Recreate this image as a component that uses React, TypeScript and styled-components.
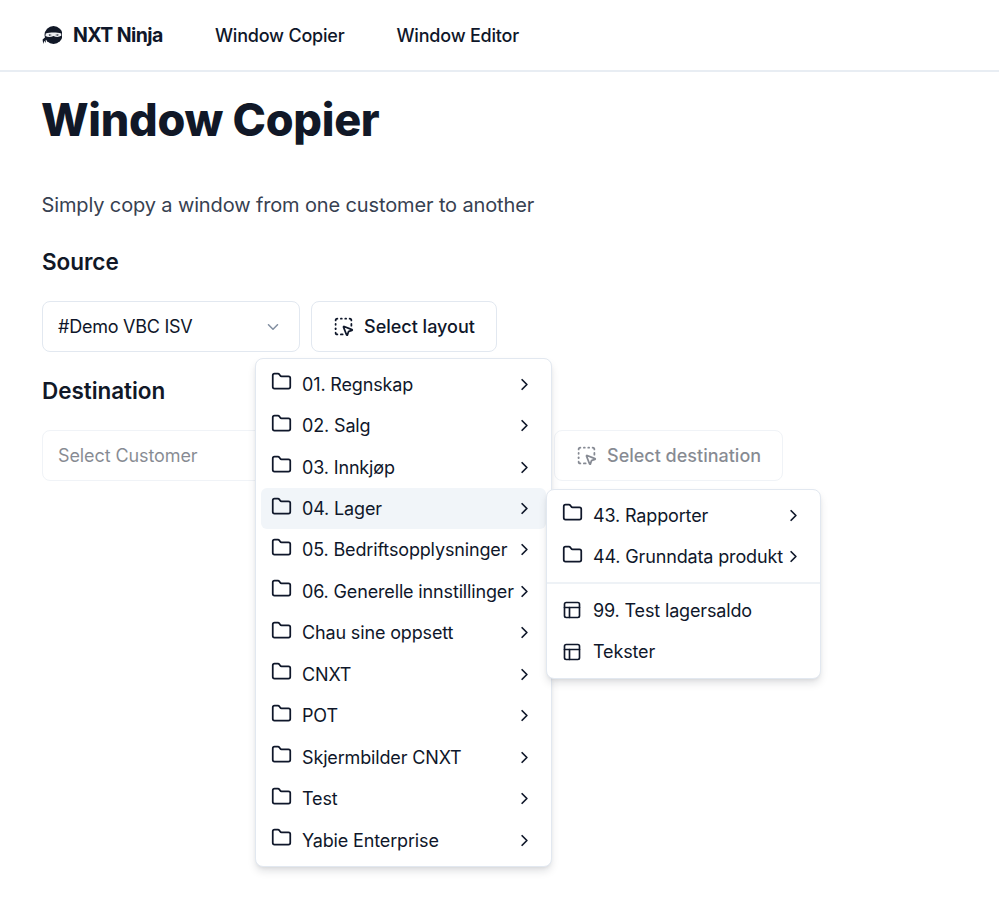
import React from 'react';
import styled, { createGlobalStyle } from 'styled-components';
import { ChevronDown, ChevronRight, Folder, PanelsTopLeft, SquareDashedMousePointer } from 'lucide-react';

const GlobalStyle = createGlobalStyle`
  html, body {
    margin: 0;
    padding: 0;
    background: #fff;
    font-family: Inter, "Liberation Sans", sans-serif;
    color: #0f172a;
  }
  * {
    box-sizing: border-box;
  }
  #root {
    min-height: 906px;
  }
`;

const Header = styled.header`
  display: flex;
  align-items: center;
  height: 72px;
  padding: 0 42px;
  border-bottom: 2px solid #e8edf3;
`;

const Brand = styled.div`
  display: flex;
  align-items: center;
  gap: 11px;
  width: 173px;
  font-size: 19.5px;
  font-weight: 700;
  letter-spacing: -0.6px;
  color: #0f172a;
`;

const NavLink = styled.a`
  font-size: 18px;
  font-weight: 500;
  letter-spacing: -0.2px;
  color: #0f172a;
  margin-right: 52px;
`;

const Main = styled.main`
  padding: 0 42px;
`;

const Title = styled.h1`
  margin: 21px 0 0 -1px;
  font-size: 45px;
  line-height: 54px;
  font-weight: 800;
  letter-spacing: -0.3px;
  color: #111827;
`;

const Lead = styled.p`
  margin: 42px 0 0 -0.5px;
  font-size: 20px;
  line-height: 32px;
  letter-spacing: -0.13px;
  color: #374151;
`;

const SectionTitle = styled.h2<{ $top: number }>`
  margin: ${(p) => p.$top}px 0 0;
  font-size: 22.5px;
  line-height: 30px;
  font-weight: 600;
  letter-spacing: -0.05px;
  color: #111827;
`;

const Row = styled.div`
  position: relative;
  display: flex;
  gap: 11px;
  margin-top: 24px;
`;

const SelectBox = styled.div<{ $disabled?: boolean }>`
  display: flex;
  align-items: center;
  justify-content: space-between;
  width: 258px;
  height: 51px;
  padding: 0 15px;
  border: 1.5px solid #e2e8f0;
  border-radius: 8px;
  background: #fff;
  font-size: 18px;
  letter-spacing: -0.1px;
  color: #0f172a;
  opacity: ${(p) => (p.$disabled ? 0.5 : 1)};

  svg {
    color: #64748b;
    opacity: 0.8;
    margin-right: 2px;
  }
`;

const SelectValue = styled.span`
  letter-spacing: -0.25px;
`;

const ActionButton = styled.button<{ $disabled?: boolean; $offset?: number }>`
  display: flex;
  align-items: center;
  gap: 10px;
  height: 51px;
  margin-left: ${(p) => p.$offset ?? 0}px;
  padding: 0 21px;
  border: 1.5px solid #e2e8f0;
  border-radius: 8px;
  background: #fff;
  font-family: inherit;
  font-size: 18px;
  font-weight: 500;
  letter-spacing: 0;
  color: #0f172a;
  opacity: ${(p) => (p.$disabled ? 0.5 : 1)};
`;

const Menu = styled.div<{ $left: number; $top: number; $width: number }>`
  position: absolute;
  left: ${(p) => p.$left}px;
  top: ${(p) => p.$top}px;
  width: ${(p) => p.$width}px;
  padding: 4.5px 5px 5.5px;
  border: 1.5px solid #e2e8f0;
  border-radius: 8px;
  background: #fff;
  box-shadow: 0 5px 9px -1px rgba(15, 23, 42, 0.13), 0 2px 4px -2px rgba(15, 23, 42, 0.1);
  z-index: 2;
`;

const MenuItem = styled.div<{ $active?: boolean }>`
  display: flex;
  align-items: center;
  height: 41.45px;
  padding: 0 11px;
  border-radius: 6px;
  background: ${(p) => (p.$active ? '#f1f5f9' : 'transparent')};
  font-size: 18px;
  letter-spacing: -0.15px;
  color: #0f172a;
  white-space: nowrap;
`;

const ItemIcon = styled.span`
  display: flex;
  width: 31px;
  flex: none;
  margin-left: -1px;
  margin-top: -5px;
`;

const PlainIcon = styled(ItemIcon)`
  margin-top: 0;
`;

const ItemChevron = styled.span`
  display: flex;
  margin-left: auto;
  margin-right: 1px;
`;

const Separator = styled.div`
  height: 2px;
  margin: 5px -5px;
  background: #eef2f6;
`;

const NinjaLogo = () => (
  <svg width="20" height="20" viewBox="0 0 20 20">
    <circle cx="11.5" cy="10" r="9" fill="#111827" />
    <path d="M3.8 8.4 C8 7.2 15 7.2 19.2 8.4 L19.3 10.8 C16.5 12.4 14 12 11.5 11 C9 12 6.2 12.4 3.4 10.9 Z" fill="#eef0f3" />
    <path d="M6.8 9.3 L10 10.1 L7 10.7 Z M16.4 9.3 L13 10.1 L16.2 10.7 Z" fill="#111827" />
    <path d="M4 11.5 L0.6 14.4 L1.2 19 L2.3 15.8 L3.8 18 L3.7 15 L5.6 14 Z" fill="#111827" />
  </svg>
);

const rootItems = [
  '01. Regnskap',
  '02. Salg',
  '03. Innkjøp',
  '04. Lager',
  '05. Bedriftsopplysninger',
  '06. Generelle innstillinger',
  'Chau sine oppsett',
  'CNXT',
  'POT',
  'Skjermbilder CNXT',
  'Test',
  'Yabie Enterprise',
];

const FolderRow = ({ label, active }: { label: string; active?: boolean }) => (
  <MenuItem $active={active}>
    <ItemIcon>
      <Folder size={21} strokeWidth={2} />
    </ItemIcon>
    {label}
    <ItemChevron>
      <ChevronRight size={19} strokeWidth={2.2} />
    </ItemChevron>
  </MenuItem>
);

const PageRow = ({ label }: { label: string }) => (
  <MenuItem>
    <PlainIcon>
      <PanelsTopLeft size={20} strokeWidth={2} />
    </PlainIcon>
    {label}
  </MenuItem>
);

const App: React.FC = () => {
  return (
    <>
      <GlobalStyle />
      <Header>
        <Brand>
          <NinjaLogo />
          NXT Ninja
        </Brand>
        <NavLink>Window Copier</NavLink>
        <NavLink>Window Editor</NavLink>
      </Header>
      <Main>
        <Title>Window Copier</Title>
        <Lead>Simply copy a window from one customer to another</Lead>
        <SectionTitle $top={26}>Source</SectionTitle>
        <Row>
          <SelectBox>
            <SelectValue>#Demo VBC ISV</SelectValue>
            <ChevronDown size={18} />
          </SelectBox>
          <ActionButton>
            <SquareDashedMousePointer size={21} strokeWidth={2} />
            Select layout
          </ActionButton>
          <Menu $left={213} $top={57} $width={297}>
            {rootItems.map((label) => (
              <FolderRow key={label} label={label} active={label === '04. Lager'} />
            ))}
          </Menu>
        </Row>
        <SectionTitle $top={24}>Destination</SectionTitle>
        <Row>
          <SelectBox $disabled>Select Customer</SelectBox>
          <ActionButton $disabled $offset={243}>
            <SquareDashedMousePointer size={21} strokeWidth={2} />
            Select destination
          </ActionButton>
          <Menu $left={504} $top={59} $width={274.5}>
            <FolderRow label="43. Rapporter" />
            <FolderRow label="44. Grunndata produkt" />
            <Separator />
            <PageRow label="99. Test lagersaldo" />
            <PageRow label="Tekster" />
          </Menu>
        </Row>
      </Main>
    </>
  );
};

export default App;
